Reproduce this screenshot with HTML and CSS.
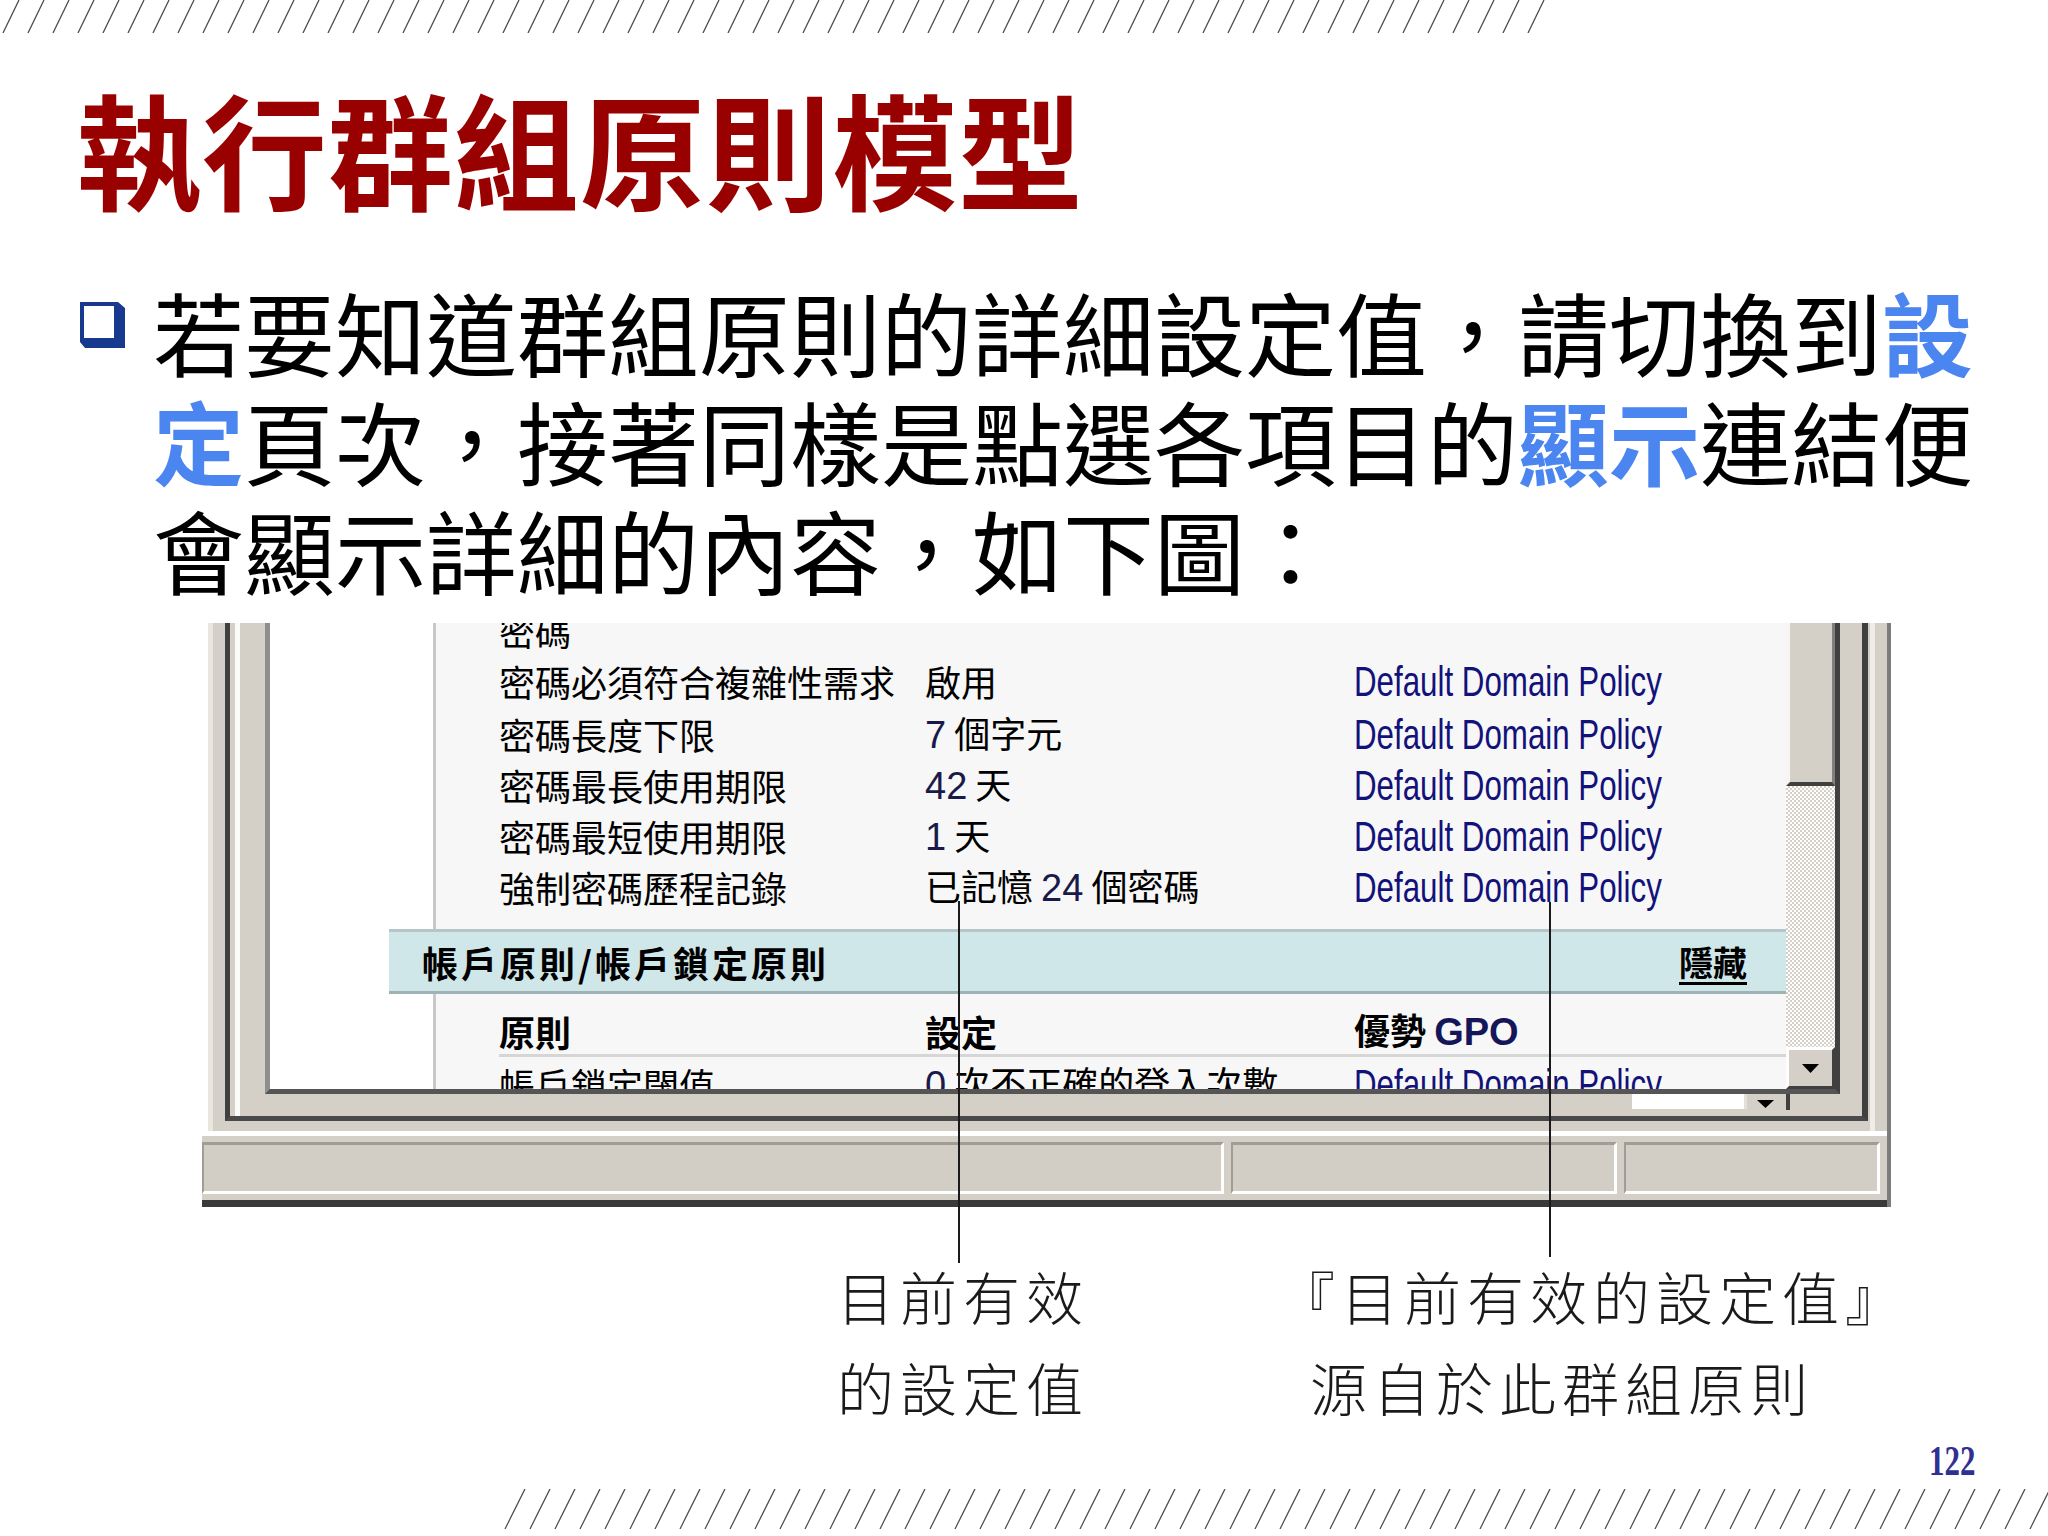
FILE: index.html
```html
<!DOCTYPE html>
<html lang="zh-Hant">
<head>
<meta charset="utf-8">
<title>執行群組原則模型</title>
<link rel="stylesheet" href="styles.css">
</head>
<body>
<div class="slide">
  <svg class="hatch" width="1552" height="33" viewBox="0 0 1552 33">
    <defs><pattern id="ht" width="25" height="33" patternUnits="userSpaceOnUse"><line x1="3" y1="33" x2="19" y2="0" stroke="#4a4a4a" stroke-width="1.3"/></pattern></defs>
    <rect width="1552" height="33" fill="url(#ht)"/>
  </svg>

  <h1 class="title">執行群組原則模型</h1>

  <div class="point">
    <svg class="bullet" width="46" height="46" viewBox="0 0 46 46">
      <path fill-rule="evenodd" fill="#173a8e" d="M0 0H38L45 6V46H5L0 40Z M4 4H34V36H4Z"/>
    </svg>
    <p class="point-text">若要知道群組原則的詳細設定值，請切換到<b class="hl">設</b><br><b class="hl">定</b>頁次，接著同樣是點選各項目的<b class="hl">顯示</b>連結便<br>會顯示詳細的內容，如下圖：</p>
  </div>

  <div class="figure">
    <div class="shot">
      <div class="upper">
        <div class="frame2">
          <div class="pane">
            <div class="viewbox">
              <div class="view">
                <div class="scrollc">
                  <div class="sect sect1">
                    <div class="row"><span>密碼</span><span></span><span></span></div>
                    <div class="row"><span>密碼必須符合複雜性需求</span><span>啟用</span><span class="ddp">Default Domain Policy</span></div>
                    <div class="row"><span>密碼長度下限</span><span><span class="num">7</span> 個字元</span><span class="ddp">Default Domain Policy</span></div>
                    <div class="row"><span>密碼最長使用期限</span><span><span class="num">42</span> 天</span><span class="ddp">Default Domain Policy</span></div>
                    <div class="row"><span>密碼最短使用期限</span><span><span class="num">1</span> 天</span><span class="ddp">Default Domain Policy</span></div>
                    <div class="row"><span>強制密碼歷程記錄</span><span>已記憶 <span class="num">24</span> 個密碼</span><span class="ddp">Default Domain Policy</span></div>
                  </div>
                  <div class="band"><span class="band-title">帳戶原則/帳戶鎖定原則</span><span class="hide">隱藏</span></div>
                  <div class="sect sect2">
                    <div class="row hrow"><span>原則</span><span>設定</span><span>優勢 <span class="gpo">GPO</span></span></div>
                    <div class="row"><span>帳戶鎖定閾值</span><span><span class="num">0</span> 次不正確的登入次數</span><span class="ddp">Default Domain Policy</span></div>
                  </div>
                </div>
              </div>
              <div class="scroll">
                <div class="thumb"></div>
                <div class="track"></div>
                <div class="sbtn"><svg width="17" height="9" viewBox="0 0 17 9"><polygon points="0,0 17,0 8.5,9" fill="#000"/></svg></div>
              </div>
            </div>
            <div class="foot">
              <div class="fbox"></div>
              <svg class="farrow" width="17" height="8" viewBox="0 0 17 8"><polygon points="0,0 17,0 8.5,8" fill="#000"/></svg>
              <div class="fline"></div>
            </div>
          </div>
        </div>
      </div>
      <div class="status">
        <div class="panel p1"></div>
        <div class="panel p2"></div>
        <div class="panel p3"></div>
      </div>
    </div>
    <span class="leader leader-1"></span>
    <span class="leader leader-2"></span>
  </div>

  <div class="labels">
    <div class="label label-1"><div>目前有效</div><div>的設定值</div></div>
    <div class="label label-2"><div>『目前有效的設定值』</div><div class="l2b">源自於此群組原則</div></div>
  </div>

  <div class="pagenum"><span>122</span></div>

  <svg class="hatch hatch-bottom" width="1545" height="40" viewBox="0 0 1545 40">
    <defs><pattern id="hb" width="25" height="40" patternUnits="userSpaceOnUse"><line x1="2" y1="40" x2="22" y2="0" stroke="#4a4a4a" stroke-width="1.3"/></pattern></defs>
    <rect width="1545" height="40" fill="url(#hb)"/>
  </svg>
</div>
</body>
</html>
```

FILE: styles.css
```css
* { box-sizing: border-box; }
html, body { margin: 0; padding: 0; background: #fff; }
body {
  width: 2048px;
  height: 1536px;
  overflow: hidden;
  font-family: "Noto Sans CJK TC", "Noto Sans CJK SC", sans-serif;
}
.slide { width: 2048px; height: 1536px; overflow: hidden; }
.hatch { display: block; }

.title {
  margin: 51px 0 0 76px;
  font-size: 125px;
  line-height: 125px;
  letter-spacing: 1px;
  font-weight: 700;
  color: #990000;
  white-space: nowrap;
}

.point { display: flex; margin-top: 67px; }
.bullet { flex: none; margin: 26px 0 0 80px; }
.point-text {
  margin: 0 0 0 27px;
  font-size: 91px;
  line-height: 109px;
  font-weight: 400;
  color: #000;
  white-space: nowrap;
}
.hl { color: #4a85f0; font-weight: 700; }

/* screenshot */
.figure { position: relative; margin-top: 20px; height: 584px; }
.shot {
  margin-left: 208px;
  width: 1683px;
  height: 584px;
  display: flex;
  flex-direction: column;
  background: #d4d0c8;
  border-right: 4px solid #7c7c7c;
}
.upper {
  height: 508px;
  margin-right: 12px;
  border-left: 5px solid #e8e6df;
  border-right: 5px solid #efede7;
  padding: 0 2px 10px 12px;
  display: flex;
  flex-direction: column;
}
.frame2 {
  flex: 1;
  display: flex;
  flex-direction: column;
  border-left: 5px solid #404040;
  border-right: 6px solid #404040;
  border-bottom: 5px solid #4a4a4a;
  padding: 0 22px 0 5px;
}
.pane {
  flex: 1;
  display: flex;
  flex-direction: column;
  border-left: 5px solid #fbfbf9;
  padding-left: 25px;
}
.viewbox {
  height: 471px;
  display: flex;
  border-left: 5px solid #8e8e8e;
  border-right: 5px solid #404040;
  border-bottom: 5px solid #555;
}
.view {
  flex: 1;
  overflow: hidden;
  background: #fff;
  font-size: 36px;
  color: #000;
}
.scrollc { margin-top: -18px; }
.sect {
  margin-left: 163px;
  border-left: 3px solid #c8c8c8;
  background: #f7f7f7;
}
.sect1 { padding-bottom: 18px; }
.row {
  display: grid;
  grid-template-columns: 426px 429px 1fr;
  height: 51px;
  line-height: 51px;
  align-items: center;
  padding-left: 63px;
  white-space: nowrap;
}
.num {
  font-family: "Liberation Sans", sans-serif;
  font-size: 38px;
  color: #1a1a4a;
}
.ddp {
  display: inline-block;
  font-family: "Liberation Sans", sans-serif;
  font-size: 42px;
  transform: scaleX(0.745);
  transform-origin: 0 50%;
  color: #12127a;
}
.band {
  margin-left: 119px;
  height: 65px;
  background: #d0e7ea;
  border-top: 3px solid #b4c6c8;
  border-bottom: 3px solid #9fb2b4;
  display: flex;
  align-items: center;
  justify-content: space-between;
  padding: 0 39px 0 33px;
  font-weight: 700;
  font-size: 36px;
  white-space: nowrap;
}
.band-title { letter-spacing: 3px; }
.hide { font-weight: 700; font-size: 34px; text-decoration: underline; text-underline-offset: 6px; }
.hrow {
  height: 63px;
  line-height: 49px;
  padding: 11px 0 0 0;
  margin-left: 63px;
  border-bottom: 3px solid #d6d6d6;
  font-weight: 700;
}
.gpo {
  font-family: "Liberation Sans", sans-serif;
  font-size: 38px;
  font-weight: 700;
  color: #15155a;
}

.scroll { width: 49px; display: flex; flex-direction: column; }
.thumb {
  height: 163px;
  background: #d4d0c8;
  border-left: 4px solid #f6f5f1;
  border-right: 3px solid #808080;
  border-bottom: 4px solid #404040;
}
.track {
  flex: 1;
  background-color: #fff;
  background-image: repeating-conic-gradient(#d4d0c8 0 25%, #ffffff 0 50%);
  background-size: 4px 4px;
}
.sbtn {
  height: 42px;
  background: #d4d0c8;
  border-top: 3px solid #fff;
  border-left: 3px solid #fff;
  border-right: 3px solid #404040;
  border-bottom: 3px solid #404040;
  display: flex;
  align-items: center;
  justify-content: center;
}
.foot { flex: 1; display: flex; align-items: flex-start; }
.fbox {
  margin-left: 1367px;
  width: 115px;
  height: 15px;
  background: #fff;
  border-right: 3px solid #e2e0da;
}
.farrow { margin: 6px 0 0 10px; }
.fline { margin-left: 12px; width: 4px; height: 16px; background: #404040; }

.status {
  margin-left: -6px;
  height: 76px;
  border-top: 5px solid #fff;
  border-bottom: 7px solid #3a3a3a;
  padding: 6px 7px 6px 0;
  display: flex;
  gap: 7px;
  background: #d4d0c8;
}
.panel {
  height: 52px;
  background: #d2cec5;
  border-top: 3px solid #a09d95;
  border-left: 2px solid #a09d95;
  border-bottom: 3px solid #fff;
  border-right: 3px solid #fff;
}
.p1 { width: 1022px; }
.p2 { width: 386px; }
.p3 { flex: 1; }

.leader { position: absolute; width: 2px; background: #1a1a1a; }
.leader-1 { left: 958px; top: 278px; height: 362px; }
.leader-2 { left: 1549px; top: 279px; height: 355px; }

.labels {
  display: flex;
  margin-top: 43px;
  font-size: 57px;
  line-height: 91px;
  letter-spacing: 6px;
  font-weight: 300;
  color: #1a1a1a;
  white-space: nowrap;
}
.label-1 { margin-left: 837px; }
.label-2 { margin-left: 189px; }
.l2b { margin-left: 32px; }

.pagenum {
  margin-top: 7px;
  height: 43px;
  line-height: 43px;
  text-align: right;
  padding-right: 73px;
  font-family: "Liberation Serif", serif;
  font-size: 43px;
  font-weight: 700;
  color: #2e3192;
}
.pagenum span { display: inline-block; transform: scaleX(0.72); transform-origin: 100% 50%; }
.hatch-bottom { margin: 7px 0 0 503px; }
```
